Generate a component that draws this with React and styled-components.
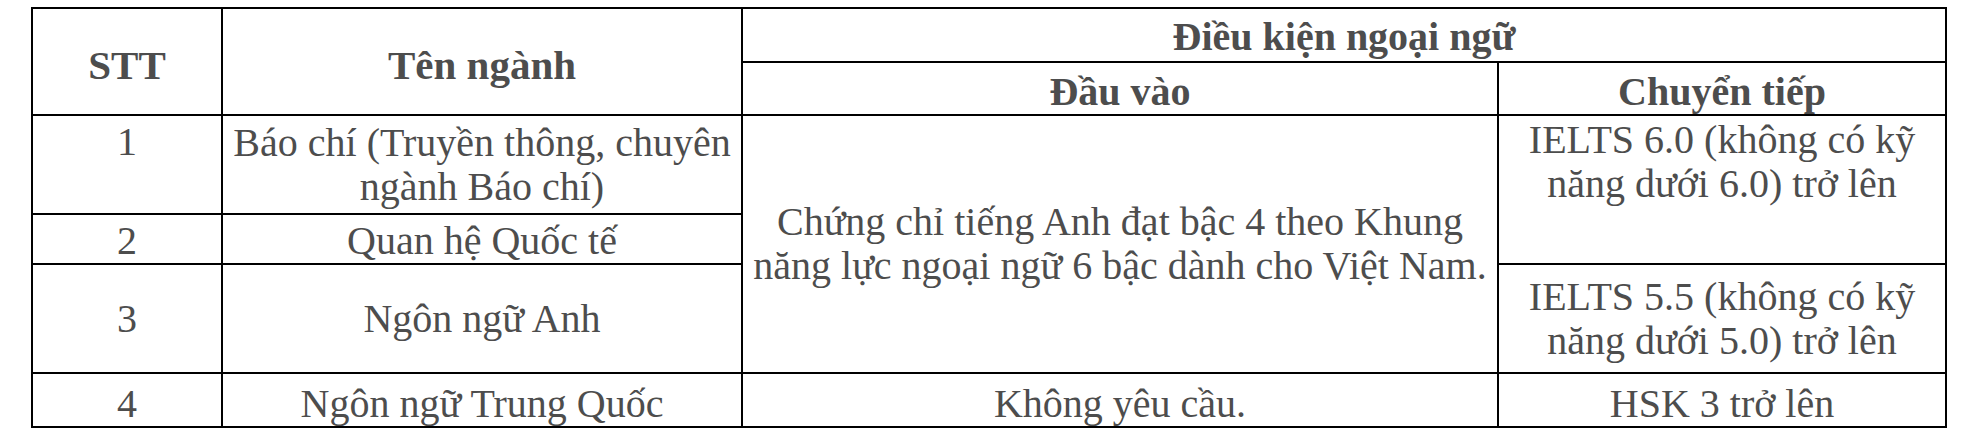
import styled, {createGlobalStyle} from 'styled-components';

const GlobalStyle = createGlobalStyle`
  html, body {
    margin: 0;
    padding: 0;
    background: #ffffff;
  }
  body {
    font-family: 'Liberation Serif', 'Times New Roman', serif;
  }
`;

const Page = styled.div`
  width: 1976px;
  height: 435px;
  padding: 7px 0 0 31px;
  box-sizing: border-box;
  background: #ffffff;
`;

const Table = styled.table`
  border-collapse: collapse;
  table-layout: fixed;
  width: 1916px;
  border: 2px solid #000;
  color: #4d4d4d;
`;

const Row = styled.tr`
  height: ${(p) => p.$h}px;
`;

const Cell = styled.td`
  border: 2px solid #000;
  padding: ${(p) => p.$pad || '0'};
  text-align: center;
  vertical-align: ${(p) => p.$align || 'middle'};
  font-size: ${(p) => (p.$big ? 41 : 40)}px;
  font-weight: ${(p) => (p.$bold ? 700 : 400)};
  line-height: 44px;
  white-space: nowrap;
  box-sizing: border-box;
`;

const App = () => {
    return (
        <Page>
            <GlobalStyle/>
            <Table>
                <colgroup>
                    <col style={{width: 190}}/>
                    <col style={{width: 520}}/>
                    <col style={{width: 756}}/>
                    <col style={{width: 448}}/>
                </colgroup>
                <tbody>
                    <Row $h={54}>
                        <Cell rowSpan={2} $bold $big $pad="7px 0 0">STT</Cell>
                        <Cell rowSpan={2} $bold $big $pad="7px 0 0">Tên ngành</Cell>
                        <Cell colSpan={2} $bold $pad="3px 0 0">Điều kiện ngoại ngữ</Cell>
                    </Row>
                    <Row $h={52}>
                        <Cell $bold $pad="7px 0 0">Đầu vào</Cell>
                        <Cell $bold $pad="7px 0 0">Chuyển tiếp</Cell>
                    </Row>
                    <Row $h={99}>
                        <Cell $align="top" $pad="4px 0 0">1</Cell>
                        <Cell>
                            Báo chí (Truyền thông, chuyên<br/>ngành Báo chí)
                        </Cell>
                        <Cell rowSpan={3}>
                            Chứng chỉ tiếng Anh đạt bậc 4 theo Khung<br/>năng lực ngoại ngữ 6 bậc dành cho Việt Nam.
                        </Cell>
                        <Cell rowSpan={2} $align="top" $pad="2px 0 0">
                            IELTS 6.0 (không có kỹ<br/>năng dưới 6.0) trở lên
                        </Cell>
                    </Row>
                    <Row $h={50}>
                        <Cell $pad="4px 0 0">2</Cell>
                        <Cell $pad="4px 0 0">Quan hệ Quốc tế</Cell>
                    </Row>
                    <Row $h={109}>
                        <Cell>3</Cell>
                        <Cell>Ngôn ngữ Anh</Cell>
                        <Cell>
                            IELTS 5.5 (không có kỹ<br/>năng dưới 5.0) trở lên
                        </Cell>
                    </Row>
                    <Row $h={51}>
                        <Cell $pad="8px 0 0">4</Cell>
                        <Cell $pad="8px 0 0">Ngôn ngữ Trung Quốc</Cell>
                        <Cell $pad="8px 0 0">Không yêu cầu.</Cell>
                        <Cell $pad="8px 0 0">HSK 3 trở lên</Cell>
                    </Row>
                </tbody>
            </Table>
        </Page>
    );
};

export default App;
